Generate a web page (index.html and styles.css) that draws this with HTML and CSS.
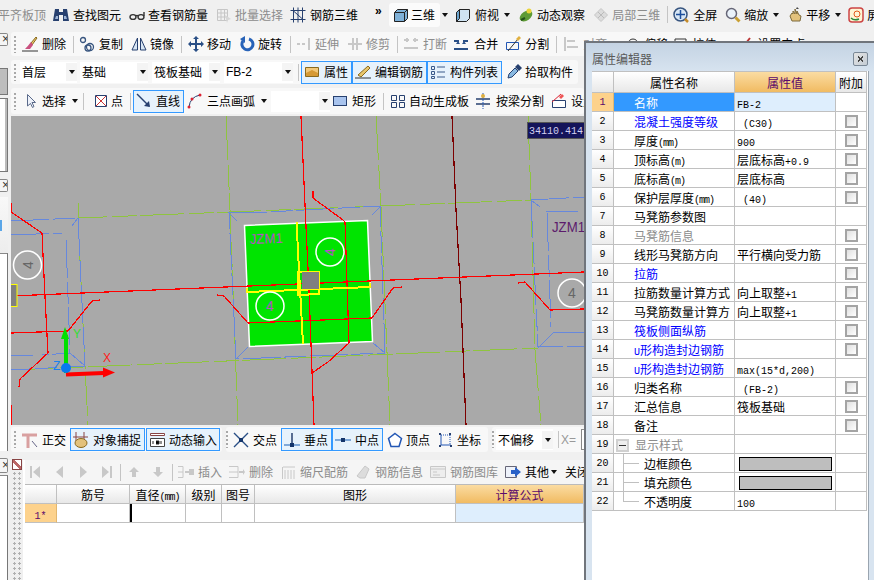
FILE: index.html
```html
<!DOCTYPE html>
<html lang="zh-CN">
<head>
<meta charset="utf-8">
<title>属性编辑器</title>
<link rel="stylesheet" href="styles.css">
</head>
<body>
<div class="app">
  <div class="bar top">
    <span class="t off m-2">平齐板顶</span>
    <span class="i m7 g4"><svg class="ic" viewBox="0 0 16 16"><path fill="#27406f" d="M2 2h4v3h4V2h4l2 12H10V8H6v6H0z"/><path fill="#9db4d6" d="M3 9h2v3H2zM11 9h2l1 3h-3z"/></svg><span class="t">查找图元</span></span>
    <span class="i m8"><svg class="ic" viewBox="0 0 16 16"><g fill="none" stroke="#333" stroke-width="1.4"><ellipse cx="4" cy="10" rx="3" ry="2.4"/><ellipse cx="12" cy="10" rx="3" ry="2.4"/><path d="M7 9q1-1 2 0M15 9V5"/></g></svg><span class="t">查看钢筋量</span></span>
    <span class="i m8"><svg class="ic" viewBox="0 0 16 16"><g fill="none" stroke="#c6c6c6"><path d="M1.500 2.500h10v11h-10zM1.500 6h10M1.500 10h10M5 2.500v11M8.500 2.500v11"/></g><path fill="#d6d6d6" d="M9 8l6 4-3 1-1 3z"/></svg><span class="t off">批量选择</span></span>
    <span class="i m7 g4"><svg class="ic" viewBox="0 0 16 16"><g fill="none" stroke="#27406f"><path d="M.5 3.500h15M.5 12.500h15M3.500.5v15M8 .5v15M12.500.5v15M3.500 4l9 8"/></g></svg><span class="t">钢筋三维</span></span>
    <span class="more m17">»</span>
    <span class="i tab m5 g2"><svg class="ic" viewBox="0 0 16 16"><path fill="#7fb1d8" stroke="#222" d="M1.500 5.500l3-3h10v9l-3 3h-10z"/><path fill="none" stroke="#222" d="M1.500 5.500h10v9M11.500 5.500l3-3"/></svg><span class="t">三维</span></span>
    <span class="ar m2"></span>
    <span class="i m7 g4"><svg class="ic" viewBox="0 0 16 16"><path fill="#cfe3f2" stroke="#222" d="M1.500 5.500l3-3h10v9l-3 3h-10z"/><path fill="#6ea6cf" stroke="#222" d="M1.500 5.500l3-3v9l-3 3z"/></svg><span class="t">俯视</span></span>
    <span class="ar m5"></span>
    <span class="i m8"><svg class="ic" viewBox="0 0 16 16"><ellipse cx="8" cy="9" rx="7" ry="4.500" fill="#5d9a34" transform="rotate(-35 8 9)"/><circle cx="11" cy="4" r="2.500" fill="#e9d43a"/><path d="M3 13l4-2" stroke="#24511a" stroke-width="2"/></svg><span class="t">动态观察</span></span>
    <span class="i m8"><svg class="ic" viewBox="0 0 16 16"><path fill="#dcdcdc" stroke="#c6c6c6" d="M8 1.500l6.500 6.500-6.500 6.500L1.500 8z"/><path stroke="#bbb" d="M5 5l6 6M11 5l-6 6"/></svg><span class="t off">局部三维</span></span>
    <span class="sep m7"></span>
    <span class="i m5 g4"><svg class="ic" viewBox="0 0 16 16"><circle cx="7.500" cy="7.500" r="6.500" fill="#d9e7f5" stroke="#38557f" stroke-width="1.500"/><path stroke="#1d4f9c" stroke-width="1.500" d="M7.500 3v9M3 7.500h9"/><path stroke="#c58b2a" stroke-width="2.500" d="M12 12l3 3"/></svg><span class="t">全屏</span></span>
    <span class="i m8"><svg class="ic" viewBox="0 0 16 16"><circle cx="6.500" cy="6.500" r="5" fill="#eaf2fa" stroke="#667" stroke-width="1.500"/><path stroke="#c9a033" stroke-width="3" d="M10.500 10.500l4 4"/></svg><span class="t">缩放</span></span>
    <span class="ar m5"></span>
    <span class="i m8"><svg class="ic" viewBox="0 0 16 16"><path fill="#e3c27c" stroke="#7d6a3c" d="M3 9l2-3 1 1V4l2 3V2l2 5V4l2 4 2 1-1 5H5z"/><path fill="#444" d="M10 0l2 2-3 0z"/></svg><span class="t">平移</span></span>
    <span class="ar m5"></span>
    <span class="i m7"><svg class="ic" viewBox="0 0 16 16"><rect x="1" y="1" width="14" height="14" rx="3" fill="#fff6d5" stroke="#c44" stroke-width="1.500"/><path fill="none" stroke="#2a8a3a" stroke-width="1.500" d="M3 11q3 3 8 1"/><circle cx="9" cy="7" r="3" fill="none" stroke="#e25a1c"/></svg><span class="t">屏</span></span>
  </div>

  <div class="work">
    <div class="side">
      <div class="x"></div>
      <div class="tree"><div class="treehd"></div><div class="treebd"></div></div>
      <div class="x x2"></div>
      <div class="tabs"><span class="bluetab"></span></div>
      <div class="pane p1"></div>
      <div class="x x3"></div>
      <div class="pane p2"></div>
    </div>

    <div class="center">
      <div class="bar row r2">
        <span class="grip"></span>
        <span class="i m6 g4"><svg class="ic" viewBox="0 0 16 16"><path stroke="#333" d="M0 15h16"/><path fill="#e8c66c" stroke="#8a6a1e" d="M9 7l5-6 1 1-5 7z"/><path fill="#c9517f" d="M9 6l2 3-3 4H3q3-3 6-7z"/></svg><span class="t">删除</span></span>
        <span class="sep m7"></span>
        <span class="i m5 g4"><svg class="ic" viewBox="0 0 16 16"><g fill="none" stroke="#38557f" stroke-width="1.300"><circle cx="4" cy="4" r="2.500"/><circle cx="11" cy="11" r="3.500"/><circle cx="9" cy="12" r="3"/></g></svg><span class="t">复制</span></span>
        <span class="i m8"><svg class="ic" viewBox="0 0 16 16"><path fill="#d8e6f4" stroke="#27406f" d="M6.500 2v12H1zM9.500 2v12H15z"/></svg><span class="t">镜像</span></span>
        <span class="sep m7"></span>
        <span class="i m6"><svg class="ic" viewBox="0 0 16 16"><path fill="#2a4f86" d="M8 0l3 3H9v4h4V5l3 3-3 3V9H9v4h2l-3 3-3-3h2V9H3v2L0 8l3-3v2h4V3H5z"/></svg><span class="t">移动</span></span>
        <span class="i m8"><svg class="ic" viewBox="0 0 16 16"><path fill="none" stroke="#2863b8" stroke-width="3" d="M4 5a5.500 5.500 0 1 0 6-2"/><path fill="#2863b8" d="M6 0v7L1 3z"/></svg><span class="t">旋转</span></span>
        <span class="sep m8"></span>
        <span class="i m5"><svg class="ic" viewBox="0 0 16 16"><path stroke="#c8c8c8" stroke-width="2" stroke-dasharray="3 2" d="M1 8h10"/><path stroke="#c8c8c8" stroke-width="2" d="M13 2v12"/></svg><span class="t off">延伸</span></span>
        <span class="i m8"><svg class="ic" viewBox="0 0 16 16"><path stroke="#c8c8c8" stroke-width="2" d="M1 8h14M6 2v12M10 2v12"/></svg><span class="t off">修剪</span></span>
        <span class="sep m7"></span>
        <span class="i m5 g4"><svg class="ic" viewBox="0 0 16 16"><path stroke="#c8c8c8" stroke-width="2" d="M1 12h14M1 4h5M10 4h5M4 2v4M12 2v4"/></svg><span class="t off">打断</span></span>
        <span class="i m6 g5"><svg class="ic" viewBox="0 0 16 16"><path stroke="#2a4f86" stroke-width="2" d="M1 13h14M1 5h5M10 5h5"/><path fill="#2a4f86" d="M3 8l2-3 2 3zM9 8l2-3 2 3z"/></svg><span class="t">合并</span></span>
        <span class="i m7 g4"><svg class="ic" viewBox="0 0 16 16"><path fill="none" stroke="#2357b5" d="M1.500 6.500h12v7h-12z"/><path stroke="#333" d="M3 15L13 3"/><path fill="#e0b040" d="M11 3l3-3 2 2-3 3z"/></svg><span class="t">分割</span></span>
        <span class="sep m7"></span>
        <span class="i m6 g4"><svg class="ic" viewBox="0 0 16 16"><path stroke="#c8c8c8" stroke-width="2" d="M2 1v14M4 5h8M4 11h11"/></svg><span class="t off">对齐</span></span>
        <span class="i m18"><svg class="ic" viewBox="0 0 16 16"><circle cx="8" cy="8" r="5" fill="none" stroke="#333"/></svg><span class="t">偏移</span></span>
        <span class="i m5"><svg class="ic" viewBox="0 0 16 16"><path d="M2 3h11v10H2z" fill="none" stroke="#333"/></svg><span class="t">拉伸</span></span>
        <span class="i m22"><svg class="ic" viewBox="0 0 16 16"><path d="M4 12l8-10" stroke="#b33" stroke-width="2"/></svg><span class="t">设置夹点</span></span>
      </div>

      <div class="bar row r3">
        <span class="grip"></span>
        <span class="sel m4 w57"><span class="t">首层</span><span class="arb"></span></span>
        <span class="sel m3 w68"><span class="t">基础</span><span class="arb"></span></span>
        <span class="sel m4 w68"><span class="t">筏板基础</span><span class="arb"></span></span>
        <span class="sel m4 w69"><span class="t sans12">FB-2</span><span class="arb"></span></span>
        <span class="sep m5"></span>
        <span class="btn m2 w51"><svg class="ic" viewBox="0 0 16 16"><path fill="#f2c879" stroke="#8a6a1e" d="M1.500 3.500h13v9h-13z"/><path fill="#d69a35" d="M2 9l6-3 6 3v3H2z"/></svg><span class="t">属性</span></span>
        <span class="btn w75"><svg class="ic" viewBox="0 0 16 16"><path stroke="#333" d="M0 14h16"/><path fill="#e8c66c" stroke="#8a6a1e" d="M3 11L13 2l2 2-9 9z"/></svg><span class="t">编辑钢筋</span></span>
        <span class="btn w75"><svg class="ic" viewBox="0 0 16 16"><path fill="none" stroke="#3a5a8a" d="M1.500 2.500h3v3h-3zM1.500 7.500h3v3h-3zM1.500 12.500h3v2h-3zM7 3h8M7 8h8M7 13h8"/></svg><span class="t">构件列表</span></span>
        <span class="i m4"><svg class="ic" viewBox="0 0 16 16"><path fill="#88b8e0" stroke="#27406f" d="M2 14l1-4 6-6 3 3-6 6z"/><path fill="#27406f" d="M9 3l3-3 4 4-3 3z"/></svg><span class="t">拾取构件</span></span>
      </div>

      <div class="bar row r4">
        <span class="grip"></span>
        <span class="i m9 g1"><svg class="ic" viewBox="0 0 16 16"><path fill="#eef2fa" stroke="#5a6a8a" d="M2.500 1.500l8 8H7l2 4-1.500 1-2-4-3 2.500z"/></svg><span class="t">选择</span></span>
        <span class="ar m6"></span>
        <span class="sep m5"></span>
        <span class="i m9 g2"><svg class="ic" viewBox="0 0 16 16"><path fill="#fff" stroke="#27406f" d="M2.500 2.500h11v11h-11z"/><path stroke="#c33" d="M3 3l10 10M13 3L3 13"/></svg><span class="t">点</span></span>
        <span class="sep m7"></span>
        <span class="btn m2 w51"><svg class="ic" viewBox="0 0 16 16"><path stroke="#27406f" stroke-width="1.400" d="M1 1l12 12"/><path fill="#27406f" d="M14 14l-6-1 5-5z"/></svg><span class="t">直线</span></span>
        <span class="i m3 g4"><svg class="ic" viewBox="0 0 16 16"><path fill="none" stroke="#27406f" d="M2 14Q3 4 13 2"/><circle cx="2" cy="14" r="1.500" fill="#d23"/><circle cx="5" cy="6" r="1.500" fill="#d23"/><circle cx="13" cy="2" r="1.500" fill="#d23"/></svg><span class="t">三点画弧</span></span>
        <span class="ar m6"></span>
        <span class="sel m4 w59"><span class="t"></span><span class="arb"></span></span>
        <span class="i m2 g4"><svg class="ic" viewBox="0 0 16 16"><rect x="1.500" y="3.500" width="13" height="9" fill="#a9c4ee" stroke="#27406f"/></svg><span class="t">矩形</span></span>
        <span class="sep m7"></span>
        <span class="i m6"><svg class="ic" viewBox="0 0 16 16"><path fill="none" stroke="#27406f" d="M1.500 2.500h5v5h-5zM9.500 2.500h5v5h-5zM1.500 9.500h5v5h-5zM9.500 9.500h5v5h-5z"/></svg><span class="t">自动生成板</span></span>
        <span class="i m6 g5"><svg class="ic" viewBox="0 0 16 16"><path stroke="#27406f" stroke-width="1.500" d="M1 6h14M1 11h14"/><path stroke="#2357b5" stroke-dasharray="2 1" d="M8 0v16"/><circle cx="8" cy="3" r="2" fill="#e0b040"/></svg><span class="t">按梁分割</span></span>
        <span class="i m7 g4"><svg class="ic" viewBox="0 0 16 16"><path fill="#fff" stroke="#27406f" d="M1.500 7.500h13v7h-13z"/><path stroke="#d23" d="M1 9L10 1"/><path fill="#e55" d="M8 4l3-3 2 2-3 3z"/></svg><span class="t">设置</span></span>
      </div>

      <svg class="cv" viewBox="11 116 573 309" xmlns="http://www.w3.org/2000/svg">
        <rect x="11" y="116" width="573" height="309" fill="#a9a9a9"/>
        <g class="gn">
          <path d="M78 203L78 218L531 200"/>
          <path d="M11 370L538 348"/>
          <path d="M226 116L230 210L238 425"/>
          <path d="M376 116L381 207L390 425"/>
          <path d="M528 116L531 200L535 350L541 425"/>
          <path d="M78 218L85 366L88 425"/>
        </g>
        <g class="bl">
          <path d="M229 213L267 212L380 206L385 353L236 359Z"/>
          <path d="M229 213L237 221M380 207L372 215M373 343L385 353M236 359L248 347"/>
          <path d="M11 221L78 218L85 366L11 370"/>
          <path d="M11 235L62 233M66 240L70 353L42 355M33 355L11 356M78 218L72 226M70 353L85 366"/>
          <path d="M531 200L584 197M531 200L538 347L584 346M546 212L578 211M547 213L551 327M553 333L584 332M531 200L540 207M538 348L553 333"/>
        </g>
        <g class="rd">
          <path d="M11 405L11 425"/>
          <path d="M48 353L20 379L19 387"/>
          <path d="M518 283L525 282L550 310L584 309"/>
          <path class="dk" d="M452 116L456 210L461 300L466 425"/>
        </g>
        <polygon class="slab" points="244.500,225.500 367.500,220.500 372.500,341.500 249.500,346.500"/>
        <g class="rd">
          <path d="M301 116L305 205L309 290L314 425"/>
          <path d="M11 296L584 272"/>
          <path d="M11 333L68 331L92 301L100 300"/>
          <path d="M217 295L224 296L248 323L372 318L393 288L402 287"/>
          <path d="M313 191L313 198L343 220L345 222L349 343L328 362L312 373"/>
          <path d="M11 203L11 212L42 233L45 297L48 353"/>
        </g>
        <g class="yl">
          <path d="M296.500 222L299 270L303 344"/>
          <path d="M247 288L247 292L370 287L370 283"/>
          <path d="M298 272L319 272L319 294L298 295Z"/>
        </g>
        <rect x="302" y="272" width="17" height="17" fill="#808080"/>
        <rect x="10" y="284.500" width="7" height="22" fill="#808080" stroke="#ffff00"/>
        <circle class="ci" cx="330" cy="252" r="14"/>
        <circle class="ci" cx="270" cy="306" r="14"/>
        <circle class="ci" cx="27.500" cy="265" r="14"/>
        <circle class="ci" cx="572" cy="293" r="14"/>
        <text class="lbl mg" x="330" y="252" transform="rotate(-90 330 252)" dy="5" text-anchor="middle">4</text>
        <text class="lbl mg" x="270" y="311" text-anchor="middle">4</text>
        <text class="lbl gy" x="27.500" y="265" transform="rotate(-90 27.500 265)" dy="5" text-anchor="middle">4</text>
        <text class="lbl gy" x="572" y="298" text-anchor="middle">4</text>
        <text class="lbl mg" x="250" y="244" textLength="33" lengthAdjust="spacingAndGlyphs" transform="rotate(-2 250 244)">JZM1</text>
        <text class="lbl pu" x="552" y="232" textLength="33" lengthAdjust="spacingAndGlyphs">JZM1</text>
        <path d="M66 373V335" stroke="#00e000" stroke-width="4"/>
        <path d="M65 327l4 12h-8z" fill="#00e000"/>
        <path d="M66 374.500L104 373" stroke="#ff0000" stroke-width="4"/>
        <path d="M115 372.500l-12-5v10z" fill="#ff0000"/>
        <circle cx="66" cy="368" r="5" fill="#0a78f0"/>
        <text class="ax axy" x="73" y="338">Y</text>
        <text class="ax axx" x="103" y="362">X</text>
        <text class="ax axz" x="53" y="370">Z</text>
        <rect x="527.500" y="122.500" width="58" height="16" fill="#14145a" stroke="#555"/>
        <text class="read" x="529" y="134">34110.414</text>
      </svg>

      <div class="snap">
        <div class="bar seg s1">
          <span class="grip"></span>
          <span class="i m6 g4"><svg class="ic" viewBox="0 0 16 16"><path stroke="#d9a0a0" stroke-width="3" d="M0 3h15M6 3v13"/><path stroke="#668" d="M10 9l5 6"/></svg><span class="t">正交</span></span>
          <span class="btn m4 w75 g4"><svg class="ic" viewBox="0 0 16 16"><path stroke="#844" d="M3 0v9M11 0v9M0 5h15"/><ellipse cx="8" cy="11" rx="6" ry="4.500" fill="#e3c27c" stroke="#8a6a1e"/></svg><span class="t">对象捕捉</span></span>
          <span class="btn m1 w74 g4"><svg class="ic" viewBox="0 0 16 16"><path fill="#fff" stroke="#844" d="M1.500 1.500h14v2h-14z"/><path fill="#fff" stroke="#444" d="M1.500 6.500h14v8h-14z"/><path stroke="#222" d="M4 9v3M7 9h3v3h-3M12 9v3"/></svg><span class="t">动态输入</span></span>
        </div>
        <div class="bar seg s2">
          <span class="grip"></span>
          <span class="i m5 g4"><svg class="ic" viewBox="0 0 16 16"><path stroke="#2a4f86" stroke-width="1.400" d="M1 1l14 14M15 1L1 15"/><rect x="6" y="6" width="4" height="4" fill="#14356b"/></svg><span class="t">交点</span></span>
          <span class="btn m4 w51"><svg class="ic" viewBox="0 0 16 16"><path stroke="#7fa8d8" stroke-width="2" d="M0 13h16"/><path stroke="#27406f" stroke-width="1.500" d="M8 1v12"/><rect x="6" y="11" width="4" height="4" fill="#14356b"/></svg><span class="t">垂点</span></span>
          <span class="btn w51 g5"><svg class="ic" viewBox="0 0 16 16"><path stroke="#7fa8d8" stroke-width="2" d="M0 8h16"/><rect x="6" y="6" width="4" height="4" fill="#14356b"/></svg><span class="t">中点</span></span>
          <span class="i m4"><svg class="ic" viewBox="0 0 16 16"><path fill="#fff" stroke="#2357b5" stroke-width="1.500" d="M8 1.500l6.500 5-2.500 8H4l-2.500-8z"/></svg><span class="t">顶点</span></span>
          <span class="i m7 g4"><svg class="ic" viewBox="0 0 16 16"><path fill="none" stroke="#2357b5" d="M4 3v10h10"/><path stroke="#2357b5" stroke-dasharray="1 1" d="M4 3h9M13 3v10"/><path fill="#27406f" d="M2 1h2v2H2zM12 1h2v2h-2zM2 13h2v2H2zM13 13h2v2h-2z"/></svg><span class="t">坐标</span></span>
        </div>
        <div class="bar seg s3">
          <span class="grip"></span>
          <span class="sel m2 w57"><span class="t">不偏移</span><span class="arb"></span></span>
          <span class="sep m5"></span>
          <span class="xeq m2">X=</span>
          <span class="inp m3"></span>
        </div>
      </div>

      <div class="lower">
        <div class="lstrip"><span class="lx"></span><span class="dots"></span></div>
        <div class="lmain">
          <div class="bar ltb">
            <svg class="nv m5" viewBox="0 0 10 14"><path fill="#c8c8c8" d="M0 1h2v12H0zM10 1v12L3 7z"/></svg>
            <svg class="nv m15" viewBox="0 0 10 14"><path fill="#c8c8c8" d="M8 1v12L1 7z"/></svg>
            <svg class="nv m13" viewBox="0 0 10 14"><path fill="#c8c8c8" d="M2 1v12l7-6z"/></svg>
            <svg class="nv m14" viewBox="0 0 10 14"><path fill="#c8c8c8" d="M10 1h-2v12h2zM0 1v12l7-6z"/></svg>
            <span class="sep m8"></span>
            <svg class="nv m8" viewBox="0 0 10 14"><path fill="#c8c8c8" d="M5 2l5 5H7v5H3V7H0z"/></svg>
            <svg class="nv m14" viewBox="0 0 10 14"><path fill="#c8c8c8" d="M5 12L0 7h3V2h4v5h3z"/></svg>
            <span class="sep m9"></span>
            <span class="i m5 g4"><svg class="ic" viewBox="0 0 16 16"><path fill="none" stroke="#c8c8c8" d="M0 2.500h5v11H0M0 8h5"/><path fill="#c8c8c8" d="M7 7h4V5h5v6h-5V9H7z"/></svg><span class="t off">插入</span></span>
            <span class="i m7 g4"><svg class="ic" viewBox="0 0 16 16"><path fill="none" stroke="#c8c8c8" d="M0 2.500h9v11H0M0 8h9"/><path fill="#c8c8c8" d="M10 7h4V5l2 3-2 3V9h-4z"/></svg><span class="t off">删除</span></span>
            <span class="i m9 g4"><svg class="ic w14" viewBox="0 0 14 16"><path fill="none" stroke="#c8c8c8" d="M.5 3v12M3 15V6M6 15V6M9 15V6M12 15V6M1 3h12"/></svg><span class="t off">缩尺配筋</span></span>
            <span class="i m7 g4"><svg class="ic" viewBox="0 0 16 16"><path fill="#dcdcdc" stroke="#c8c8c8" d="M2 12L10 2l4 3-4 9H5z"/></svg><span class="t off">钢筋信息</span></span>
            <span class="i m7 g4"><svg class="ic" viewBox="0 0 16 16"><path fill="#eee" stroke="#c8c8c8" d="M.5 2.500h15v11H.5zM.5 5h15"/><path stroke="#c8c8c8" d="M3 8h4M3 11h7"/></svg><span class="t off">钢筋图库</span></span>
            <span class="i m7 g4"><svg class="ic" viewBox="0 0 16 16"><path fill="#eef2fa" stroke="#667" d="M.5 2.500h11v11H.5z"/><path fill="#2a62c8" d="M6 6h4V3l6 5-6 5v-3H6z"/></svg><span class="t">其他</span></span>
            <span class="ar m2"></span>
            <span class="t m8">关闭</span>
          </div>
          <table class="gr">
            <colgroup><col class="g0"><col class="g1c"><col class="g2c"><col class="g3c"><col class="g4c"><col class="g5c"><col class="g6c"></colgroup>
            <tr><th></th><th>筋号</th><th>直径<span class="s">(mm)</span></th><th>级别</th><th>图号</th><th>图形</th><th class="thsel">计算公式</th></tr>
            <tr><td class="rn"><span class="m">1*</span></td><td></td><td class="cur"></td><td></td><td></td><td></td><td class="cellsel"></td></tr>
          </table>
        </div>
      </div>
    </div>
  </div>

  <div class="panel">
    <div class="ptitle"><span>属性编辑器</span><span class="pclose"></span></div>
    <div class="pbody">
      <table class="pt">
        <colgroup><col class="c0"><col class="c1"><col class="c2"><col class="c3"></colgroup>
        <tr class="hd"><th></th><th>属性名称</th><th class="thsel">属性值</th><th>附加</th></tr>
        <tr><td class="rn">1</td><td class="nm selname">名称</td><td class="vl selval"><span class="m">FB-2</span></td><td></td></tr>
        <tr><td class="no">2</td><td class="nm blue">混凝土强度等级</td><td class="vl"><span class="m"> (C30)</span></td><td><div class="cb"></div></td></tr>
        <tr><td class="no">3</td><td class="nm">厚度<span class="s">(mm)</span></td><td class="vl"><span class="m">900</span></td><td><div class="cb"></div></td></tr>
        <tr><td class="no">4</td><td class="nm">顶标高<span class="s">(m)</span></td><td class="vl">层底标高<span class="m">+0.9</span></td><td><div class="cb"></div></td></tr>
        <tr><td class="no">5</td><td class="nm">底标高<span class="s">(m)</span></td><td class="vl">层底标高</td><td><div class="cb"></div></td></tr>
        <tr><td class="no">6</td><td class="nm">保护层厚度<span class="s">(mm)</span></td><td class="vl"><span class="m"> (40)</span></td><td><div class="cb"></div></td></tr>
        <tr><td class="no">7</td><td class="nm">马凳筋参数图</td><td class="vl"></td><td></td></tr>
        <tr><td class="no">8</td><td class="nm gray">马凳筋信息</td><td class="vl"></td><td><div class="cb"></div></td></tr>
        <tr><td class="no">9</td><td class="nm">线形马凳筋方向</td><td class="vl">平行横向受力筋</td><td><div class="cb"></div></td></tr>
        <tr><td class="no">10</td><td class="nm blue">拉筋</td><td class="vl"></td><td><div class="cb"></div></td></tr>
        <tr><td class="no">11</td><td class="nm">拉筋数量计算方式</td><td class="vl">向上取整<span class="m">+1</span></td><td><div class="cb"></div></td></tr>
        <tr><td class="no">12</td><td class="nm">马凳筋数量计算方</td><td class="vl">向上取整<span class="m">+1</span></td><td><div class="cb"></div></td></tr>
        <tr><td class="no">13</td><td class="nm blue">筏板侧面纵筋</td><td class="vl"></td><td><div class="cb"></div></td></tr>
        <tr><td class="no">14</td><td class="nm blue"><span class="m">U</span>形构造封边钢筋</td><td class="vl"></td><td><div class="cb"></div></td></tr>
        <tr><td class="no">15</td><td class="nm blue"><span class="m">U</span>形构造封边钢筋</td><td class="vl"><span class="m">max(15*d,200)</span></td><td></td></tr>
        <tr><td class="no">16</td><td class="nm">归类名称</td><td class="vl"><span class="m"> (FB-2)</span></td><td><div class="cb"></div></td></tr>
        <tr><td class="no">17</td><td class="nm">汇总信息</td><td class="vl">筏板基础</td><td><div class="cb"></div></td></tr>
        <tr><td class="no">18</td><td class="nm">备注</td><td class="vl"></td><td><div class="cb"></div></td></tr>
        <tr><td class="no">19</td><td class="nm gray grp"><span class="minus"></span>显示样式</td><td class="vl"></td><td></td></tr>
        <tr><td class="no">20</td><td class="nm leaf mid">边框颜色</td><td class="vl"><div class="sw"></div></td><td></td></tr>
        <tr><td class="no">21</td><td class="nm leaf mid">填充颜色</td><td class="vl"><div class="sw"></div></td><td></td></tr>
        <tr><td class="no">22</td><td class="nm leaf end">不透明度</td><td class="vl"><span class="m">100</span></td><td></td></tr>
      </table>
    </div>
  </div>
</div>
</body>
</html>
```

FILE: styles.css
```css
*{box-sizing:border-box}
html,body{margin:0;padding:0}
body{font-family:"Noto Sans CJK SC","Liberation Sans",sans-serif;font-size:12px;color:#000;background:#f0f0f0}
.app{position:relative;width:874px;height:580px;overflow:hidden;background:#f0f0f0;display:flex;flex-direction:column}
.bar{display:flex;align-items:center;white-space:nowrap;flex:none}
.top{height:32px;padding-bottom:3px;overflow:hidden}
.t{line-height:16px;flex:none}
.off{color:#8c8c8c}
.i{display:inline-flex;align-items:center;gap:3px;flex:none}
.ic{width:16px;height:16px;flex:none;display:block}
.ic.w14{width:14px}
.g1{gap:1px}.g2{gap:2px}.g4{gap:4px}.g5{gap:5px}
.m-2{margin-left:-2px}.m1{margin-left:1px}.m2{margin-left:2px}.m3{margin-left:3px}.m4{margin-left:4px}.m5{margin-left:5px}.m6{margin-left:6px}.m7{margin-left:7px}.m8{margin-left:8px}.m9{margin-left:9px}.m13{margin-left:13px}.m14{margin-left:14px}.m15{margin-left:15px}.m17{margin-left:17px}.m18{margin-left:18px}.m22{margin-left:22px}
.w51{width:51px}.w57{width:57px}.w59{width:59px}.w68{width:68px}.w69{width:69px}.w74{width:74px}.w75{width:75px}
.more{width:9px;font:bold 12px/14px "Liberation Sans",sans-serif;flex:none;margin-top:-8px}
.tab{background:#fbfbfb;border-radius:3px;padding:3px 5px 3px 4px;height:24px}
.ar{width:0;height:0;border:3.5px solid transparent;border-top:4px solid #111;border-bottom:0;flex:none;box-sizing:content-box}
.sep{width:1px;height:17px;background:#c4c4c4;flex:none}
.grip{width:2px;height:17px;margin-left:3px;flex:none;background:repeating-linear-gradient(#a8a8a8 0 2px,transparent 2px 4px)}
.work{flex:1;display:flex;min-height:0}
.side{width:8px;margin-right:3px;flex:none;display:flex;flex-direction:column}
.x{height:13px;margin-top:1px;background:#f5f5f5;border:1px solid #888;border-left:0;border-radius:0 2px 2px 0;display:flex;align-items:center;justify-content:flex-end;overflow:hidden}
.x::after{content:"×";font:12px/11px "Liberation Sans",sans-serif;color:#333;margin-right:-2px}
.tree{margin-top:22px;height:104px;display:flex;flex-direction:column;gap:3px}
.treehd{height:27px;border:1px solid #777;border-left:0;background:#bdbdbd}
.treebd{flex:1;border:1px solid #777;border-left:0;background:#fff;box-shadow:inset -2px 0 #bbb}
.x2{margin-top:7px}
.tabs{height:56px;margin-top:5px;background:linear-gradient(#f8f8f8,#ededed);display:flex;align-items:center}
.bluetab{width:2px;height:11px;background:#5aa6e8}
.pane{background:#fff;border-right:1px solid #777;border-top:1px solid #888}
.p1{height:198px}
.x3{margin-top:7px;height:15px}
.p2{flex:1;margin-top:2px}
.center{width:573px;flex:none;display:flex;flex-direction:column}
.row{background:#f8f8f8;border-radius:3px}
.r2{width:791px;height:24px;margin-bottom:4px}
.r3{width:567px;height:24px;margin-bottom:4px}
.r4{width:573px;height:26px;margin-bottom:2px}
.sel{display:flex;align-items:center;justify-content:space-between;height:21px;background:#fff;padding-left:2px;flex:none}
.arb{width:11px;height:18px;background:#f4f4f4;display:flex;align-items:center;justify-content:center;flex:none}
.arb::after{content:"";border:3px solid transparent;border-top:4px solid #111;border-bottom:0}
.sans12{font:12px/16px "Liberation Sans",sans-serif}
.btn{display:inline-flex;align-items:center;gap:4px;height:23px;padding-left:2px;background:#e6f2fc;border:1px solid #3399ff;flex:none}
.cv{display:block;width:573px;height:309px;flex:none}
.gn path,.bl path,.rd path,.yl path{fill:none;shape-rendering:crispEdges}
.gn path{stroke:#8fc43f;stroke-dasharray:44 5 25 3}
.bl path{stroke:#6688dd;stroke-dasharray:38 4 22 3}
.rd path{stroke:#ff0000;stroke-width:1.200}
.rd path.dk{stroke:#7c0000}
.yl path{stroke:#ffff00;stroke-width:2}
.slab{fill:#00e400;stroke:#fff;stroke-width:1.500}
.ci{fill:none;stroke:#fff;stroke-width:1.500}
.lbl{font:14px "Liberation Sans",sans-serif}
.mg{fill:#b451c4}
.gy{fill:#666}
.pu{fill:#5c1b6c}
.ax{font:12px "Liberation Sans",sans-serif}
.axy{fill:#33dd33}.axx{fill:#ff2020}.axz{fill:#1a80ee}
.read{font:10px "Liberation Mono",monospace;fill:#d0d0f0}
.snap{display:flex;height:25px;margin-top:2px;flex:none}
.seg{background:#f8f8f8;border-radius:3px;height:25px}
.s1{width:211px}
.s2{width:262px;margin-left:4px}
.s3{flex:1;margin-left:4px;overflow:hidden}
.s3 .grip{margin-left:0}
.s2 .grip{margin-left:0}
.xeq{font:12px "Liberation Sans",sans-serif;color:#999;width:17px;flex:none}
.inp{width:10px;height:21px;border:1px solid #888;background:#fff;flex:none}
.lower{flex:1;display:flex;margin-top:8px;min-height:0}
.lstrip{width:12px;flex:none;display:flex;flex-direction:column;align-items:center}
.lx{width:10px;height:11px;background:linear-gradient(45deg,#fff 0 40%,#b66 40% 60%,#fff 60%),linear-gradient(135deg,#888,#ddd);border:1px solid #844;flex:none;margin-top:-1px}
.dots{flex:1;width:10px;margin-top:1px;background:radial-gradient(circle,#b0b0b0 1px,transparent 1.300px) 0 0/5px 5px}
.lmain{flex:1;background:#fff;min-width:0;overflow:hidden}
.ltb{height:25px;background:#f5f5f5;margin-left:2px;width:580px;overflow:hidden;border-bottom:1px solid #bbb}
.nv{width:10px;height:14px;flex:none}
table{border-collapse:separate;border-spacing:0;table-layout:fixed}
th,td{padding:1px 0 0;height:19px;font-weight:400;white-space:nowrap;overflow:hidden;border-right:1px solid #c0c0c0;border-bottom:1px solid #c0c0c0;line-height:16px;text-align:center;background:#fff}
th{background:linear-gradient(#fff,#e8e8e8)}
th.thsel{background:linear-gradient(#fbdca2,#f1bb62);color:#5b0a6b}
.s{font:10px/10px "Liberation Mono",monospace;letter-spacing:-1px}
.m{font:10px/10px "Liberation Mono",monospace;white-space:pre}
.gr{width:559px;margin-left:2px}
.g0{width:32px}.g1c{width:73px}.g2c{width:56px}.g3c{width:36px}.g4c{width:33px}.g5c{width:201px}.g6c{width:128px}
.rn{background:#fdd28c;color:#5b0a6b;border-right:1px solid #e2b76f}
.cur{box-shadow:inset 2px 0 #000}
.cellsel{background:#deeefd}
.panel{position:absolute;left:584px;top:41px;width:290px;height:539px;border-left:2px solid #70757c;border-top:2px solid #70757c;background:linear-gradient(#c4d3e3,#d8e4f0 30px,#d8e4f0)}
.ptitle{height:28px;display:flex;align-items:center;justify-content:space-between;padding:3px 6px 0 6px;color:#5a5a5a}
.pclose{width:15px;height:14px;border:1px solid #7a8896;border-radius:2px;background:linear-gradient(135deg,#e4e4e4,#c4ccd4);flex:none;position:relative}
.pclose::after{content:"";position:absolute;left:4px;top:3px;width:5px;height:6px;background:linear-gradient(45deg,transparent 42%,#444 42% 58%,transparent 58%),linear-gradient(-45deg,transparent 42%,#444 42% 58%,transparent 58%)}
.pbody{width:277px;margin-left:6px;height:509px;background:#fff;border-right:1px solid #9aa5b0}
.pt{width:275px}
.c0{width:22px}.c1{width:121px}.c2{width:101px}.c3{width:31px}
.pt tr.hd th{height:22px;border-top:1px solid #c0c0c0;font-size:12px}
.pt .no{background:linear-gradient(#fff,#ececec);font:10px/14px "Liberation Mono",monospace;text-align:center}
.pt .rn{font:10px/14px "Liberation Mono",monospace}
.nm{text-align:left;padding-left:20px}
.vl{text-align:left;padding-left:2px}
.blue{color:#0000ff}
.gray{color:#8c8c8c}
.selname{background:#3399ff;color:#fff}
.selval{background:#deeefd}
.cb{width:13px;height:13px;margin:0 auto;border:2px solid #a4a4a4;background:linear-gradient(135deg,#e0e0e0,#fff)}
.grp{padding-left:2px}
.minus{display:inline-block;width:13px;height:13px;margin-right:6px;border:2px solid #d0d0d0;background:linear-gradient(#333,#333) center/7px 1px no-repeat,#eee;vertical-align:-2px}
.leaf{padding-left:30px}
.mid{background:linear-gradient(#c0c0c0,#c0c0c0) 9px 0/1px 100% no-repeat,linear-gradient(#c0c0c0,#c0c0c0) 9px 9px/16px 1px no-repeat,#fff}
.end{background:linear-gradient(#c0c0c0,#c0c0c0) 9px 0/1px 10px no-repeat,linear-gradient(#c0c0c0,#c0c0c0) 9px 9px/16px 1px no-repeat,#fff}
.sw{width:93px;height:14px;margin-left:2px;background:#bebebe;border:1px solid #000}
```
